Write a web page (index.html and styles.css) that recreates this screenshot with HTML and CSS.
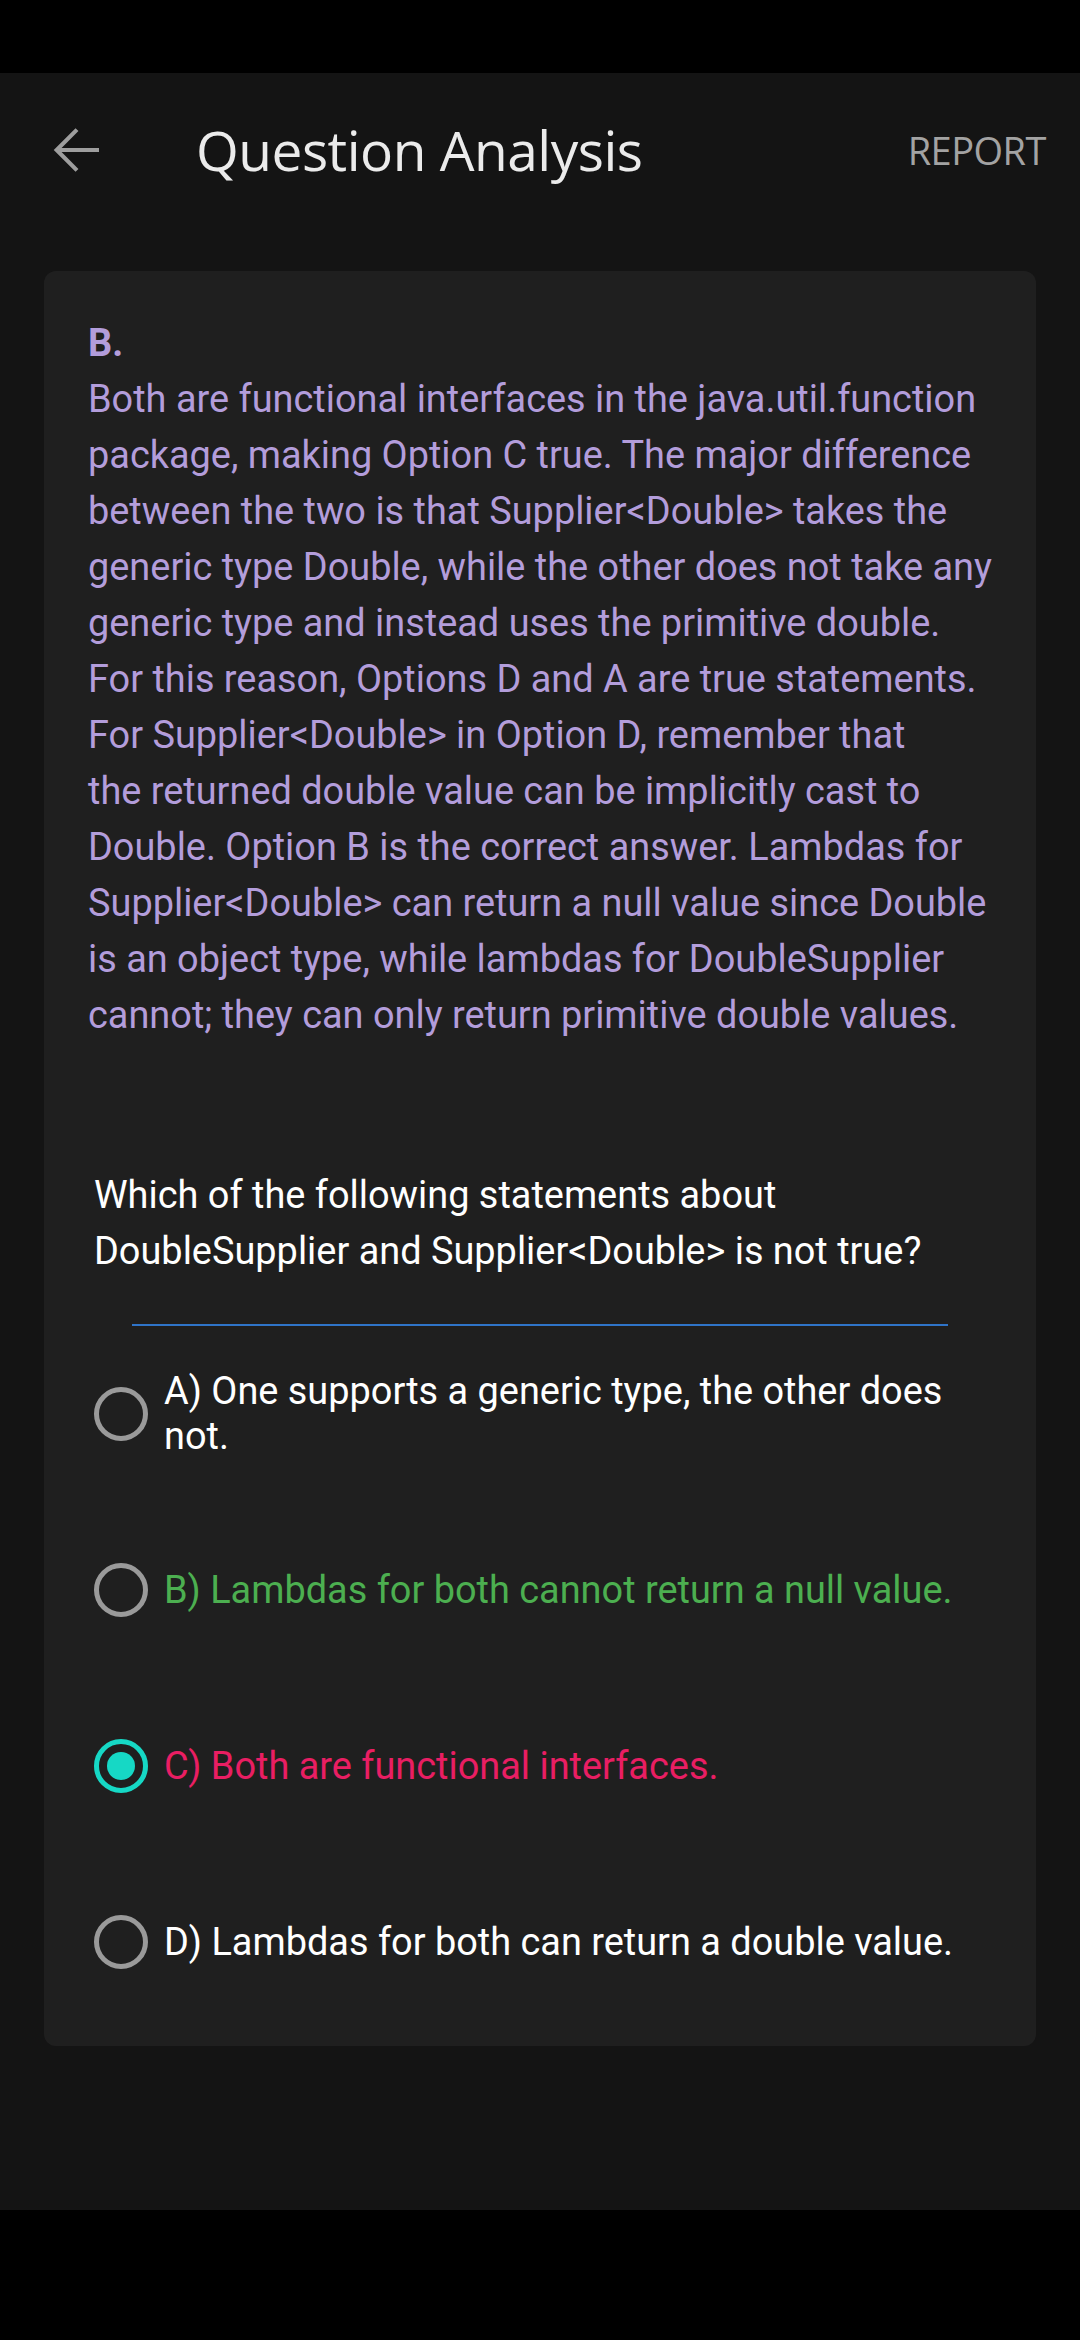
FILE: index.html
```html
<!DOCTYPE html>
<html lang="en">
<head>
<meta charset="utf-8">
<title>Question Analysis</title>
<link rel="stylesheet" href="styles.css">
</head>
<body>
<div class="status"></div>
<div class="app">
  <header class="toolbar">
    <svg class="back" viewBox="0 0 24 24" aria-hidden="true">
      <path d="M20 12H4.8M12 4.6L4.6 12L12 19.4" fill="none" stroke="#9e9e9e" stroke-width="1.5"/>
    </svg>
    <h1 class="title">Question Analysis</h1>
    <span class="report">REPORT</span>
  </header>
  <main class="card">
    <p class="explain"><b>B.</b><br>Both are functional interfaces in the java.util.function<br>package, making Option C true. The major difference<br>between the two is that Supplier&lt;Double&gt; takes the<br>generic type Double, while the other does not take any<br>generic type and instead uses the primitive double.<br>For this reason, Options D and A are true statements.<br>For Supplier&lt;Double&gt; in Option D, remember that<br>the returned double value can be implicitly cast to<br>Double. Option B is the correct answer. Lambdas for<br>Supplier&lt;Double&gt; can return a null value since Double<br>is an object type, while lambdas for DoubleSupplier<br>cannot; they can only return primitive double values.</p>
    <p class="question">Which of the following statements about<br>DoubleSupplier and Supplier&lt;Double&gt; is not true?</p>
    <div class="divider"></div>
    <div class="options">
      <div class="option"><span class="radio"></span><span class="opt-text">A) One supports a generic type, the other does<br>not.</span></div>
      <div class="option"><span class="radio"></span><span class="opt-text correct">B) Lambdas for both cannot return a null value.</span></div>
      <div class="option"><span class="radio checked"></span><span class="opt-text wrong">C) Both are functional interfaces.</span></div>
      <div class="option"><span class="radio"></span><span class="opt-text">D) Lambdas for both can return a double value.</span></div>
    </div>
  </main>
</div>
<div class="navbar"></div>
</body>
</html>
```

FILE: styles.css
```css
html, body {
  margin: 0;
  padding: 0;
  background: #000;
}
body {
  width: 1080px;
  height: 2340px;
  font-family: Roboto, "Liberation Sans", sans-serif;
  overflow: hidden;
}
.status {
  height: 73px;
  background: #000;
}
.app {
  height: 2137px;
  background: #141414;
  display: flex;
  flex-direction: column;
}
.toolbar {
  height: 154px;
  display: flex;
  align-items: center;
  padding: 0 34px 0 44px;
}
.back {
  width: 66px;
  height: 66px;
  flex: none;
}
.title {
  margin: -2px 0 0 86px;
  flex: 1;
  font-family: "Open Sans", sans-serif;
  font-weight: 400;
  font-size: 55px;
  letter-spacing: -0.5px;
  color: #ebebeb;
  line-height: 1;
}
.report {
  font-family: "Open Sans", sans-serif;
  font-size: 38px;
  color: #a3a3a3;
  letter-spacing: -0.5px;
}
.card {
  margin: 44px 44px 0 44px;
  background: #1f1f1f;
  border-radius: 12px;
  padding: 44px 44px 16px 44px;
}
.explain {
  margin: 0;
  font-size: 37.9px;
  line-height: 56px;
  color: #b39ddb;
  white-space: nowrap;
}
.explain b {
  font-weight: 700;
}
.question {
  margin: 124px 0 0 6px;
  font-size: 37.9px;
  line-height: 56px;
  color: #ffffff;
  white-space: nowrap;
}
.divider {
  margin: 45px 44px 0 44px;
  height: 2px;
  background: #2f74c8;
}
.options {
  display: flex;
  flex-direction: column;
}
.option {
  height: 176px;
  display: flex;
  align-items: center;
  padding-left: 6px;
}
.radio {
  width: 54px;
  height: 54px;
  box-sizing: border-box;
  border: 5.5px solid #9a9a9a;
  border-radius: 50%;
  flex: none;
  display: flex;
  align-items: center;
  justify-content: center;
}
.radio.checked {
  border-color: #16d8c5;
}
.radio.checked::after {
  content: "";
  width: 28px;
  height: 28px;
  border-radius: 50%;
  background: #16d8c5;
}
.opt-text {
  margin-left: 16px;
  font-size: 37.9px;
  line-height: 45px;
  color: #ffffff;
  white-space: nowrap;
}
.opt-text.correct {
  color: #4caf50;
}
.opt-text.wrong {
  color: #e91e63;
}
.navbar {
  height: 130px;
  background: #000;
}
```
